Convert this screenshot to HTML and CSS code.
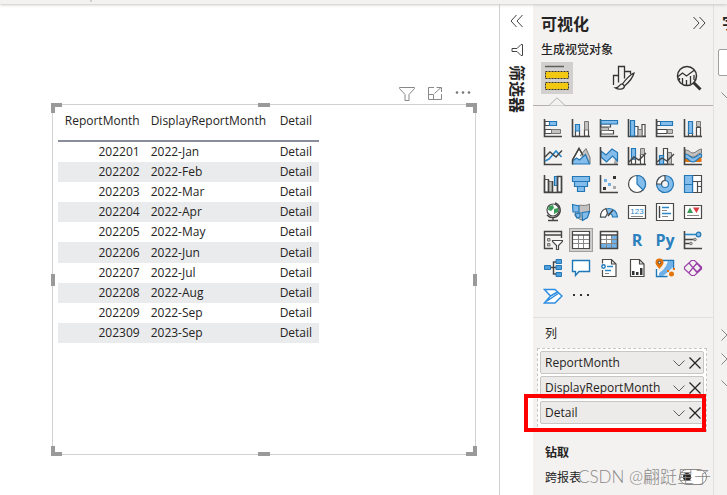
FILE: index.html
```html
<!DOCTYPE html>
<html lang="zh-CN">
  <head>
    <meta charset="UTF-8" />
    <meta name="viewport" content="width=device-width, initial-scale=1.0" />
    <title>Report</title>
    <link rel="stylesheet" href="styles.css">
  </head>
  <body>
    <div class="topbar"><span class="topbar-sep"></span></div>
    <div class="workspace">
      <main class="canvas">
        <div class="visual-tools">
          <button type="button" aria-label="Filter"><svg width="18" height="18" viewBox="0 0 18 18"><path d="M1.500 2.500h15v1l-5.500 6v6h-4v-6l-5.500-6z"/></svg></button>
          <button type="button" aria-label="Focus mode"><svg width="18" height="18" viewBox="0 0 18 18"><path d="M8 2.500H2.500v12h13V9M2.500 9.500h5v5M8.500 8.500l6.500-6M10.500 2.500h5V7"/></svg></button>
          <button type="button" aria-label="More"><svg class="dots" width="18" height="18" viewBox="0 0 18 18"><circle cx="3" cy="7.500" r="1.300"/><circle cx="9" cy="7.500" r="1.300"/><circle cx="15" cy="7.500" r="1.300"/></svg></button>
        </div>
        <div class="visual">
          <table class="report-table">
            <thead>
              <tr><th class="num">ReportMonth</th><th>DisplayReportMonth</th><th>Detail</th></tr>
            </thead>
            <tbody>
              <tr><td class="num">202201</td><td>2022-Jan</td><td>Detail</td></tr>
              <tr><td class="num">202202</td><td>2022-Feb</td><td>Detail</td></tr>
              <tr><td class="num">202203</td><td>2022-Mar</td><td>Detail</td></tr>
              <tr><td class="num">202204</td><td>2022-Apr</td><td>Detail</td></tr>
              <tr><td class="num">202205</td><td>2022-May</td><td>Detail</td></tr>
              <tr><td class="num">202206</td><td>2022-Jun</td><td>Detail</td></tr>
              <tr><td class="num">202207</td><td>2022-Jul</td><td>Detail</td></tr>
              <tr><td class="num">202208</td><td>2022-Aug</td><td>Detail</td></tr>
              <tr><td class="num">202209</td><td>2022-Sep</td><td>Detail</td></tr>
              <tr><td class="num">202309</td><td>2023-Sep</td><td>Detail</td></tr>
            </tbody>
          </table>
          <span class="handle corner tl"></span>
          <span class="handle corner tr"></span>
          <span class="handle corner bl-corner"></span>
          <span class="handle corner br"></span>
          <span class="handle bar top"></span>
          <span class="handle bar bottom"></span>
          <span class="handle side left"></span>
          <span class="handle side right"></span>
        </div>
      </main>

      <aside class="filters">
        <button type="button" aria-label="展开"><svg width="16" height="16" viewBox="0 0 16 16"><path d="M7.500 2L2 8l5.500 6M13.500 2L8 8l5.500 6"/></svg></button>
        <svg width="14" height="14" viewBox="0 0 14 14"><path d="M12.500 1.500v11h-1.500L7 8.500H2v-3h5l4-4z"/></svg>
        <h2>筛选器</h2>
      </aside>

      <section class="viz">
        <header class="viz-head">
          <h2>可视化</h2>
          <button type="button" aria-label="折叠"><svg width="16" height="16" viewBox="0 0 16 16"><path d="M2.500 2L8 8l-5.500 6M8.500 2L14 8l-5.500 6"/></svg></button>
        </header>
        <p class="viz-sub">生成视觉对象</p>
        <div class="tabs">
          <button type="button" class="tab active" aria-label="生成">
            <svg width="26" height="28" viewBox="0 0 26 28"><path d="M1 2.500h19" stroke="#605e5c" stroke-width="1.500"/><path d="M1.500 7.500h23v7h-23zM1.500 18.500h23v7h-23z" fill="#f2c811" stroke="#333" stroke-dasharray="2 1"/></svg>
          </button>
          <button type="button" class="tab" aria-label="格式">
            <svg width="26" height="28" viewBox="0 0 26 28"><path d="M3.500 21v-9.500h5v7M8.500 11.500v-9h6v12M14.500 7.500h6V10M24 9c-3 1-9 7-11.500 11l2 2C18 19 23 13 24 9zM12.500 20c-3-.5-3 4-7 4 3 2 9 1.500 9-2" fill="none" stroke="#333" stroke-width="1.300"/></svg>
          </button>
          <button type="button" class="tab" aria-label="分析">
            <svg width="28" height="28" viewBox="0 0 28 28"><circle cx="12" cy="12" r="9.500" fill="none" stroke="#333" stroke-width="1.500"/><path d="M2.500 13l5-4 4 3 8-6M7.500 20v-6M11.500 21v-5M15.500 20v-8M4.500 16v-2M19 16v-5" fill="none" stroke="#333" stroke-width="1.300"/><path d="M18.500 18.500l7 7" stroke="#333" stroke-width="3"/></svg>
          </button>
        </div>
        <div class="tab-line"><svg width="16" height="9" viewBox="0 0 16 9"><path d="M0 8.500L8 .8l8 7.700"/></svg></div>

        <div class="gallery">
          <button type="button" aria-label="堆积条形图"><svg viewBox="0 0 20 20"><path class="ax" d="M1.500 1v17.500H19"/><path class="w" d="M2 3.500h5v4H2zM2 11.500h7v4H2z"/><path class="b" d="M6.500 3.500h7v4h-7z"/><path class="g" d="M8.500 11.500h9v4h-9z"/></svg></button>
          <button type="button" aria-label="堆积柱形图"><svg viewBox="0 0 20 20"><path class="ax" d="M1.500 1v17.500H19"/><path class="w" d="M4.500 12.500h4v5.500h-4zM13.500 11.500h4v6.500h-4z"/><path class="b" d="M4.500 6.500h4v6.500h-4z"/><path class="g" d="M13.500 3.500h4v8.500h-4z"/></svg></button>
          <button type="button" aria-label="簇状条形图"><svg viewBox="0 0 20 20"><path class="ax" d="M1.500 1v17.500H19"/><path class="w" d="M2 6h9.500v3H2zM2 12.500h12.500v3.500H2z"/><path class="g" d="M2 9.500h7.500v3H2z"/><path class="b" d="M2 2.500h16.500v3.500H2z"/></svg></button>
          <button type="button" aria-label="簇状柱形图"><svg viewBox="0 0 20 20"><path class="ax" d="M1.500 1v17.500H19"/><path class="w" d="M7.500 8.500h3.500V18H7.500zM15 6.500h3V18h-3z"/><path class="g" d="M11 11.500h4V18h-4z"/><path class="b" d="M3.500 2.500h4v15.500h-4z"/></svg></button>
          <button type="button" aria-label="百分比堆积条形图"><svg viewBox="0 0 20 20"><path class="ax" d="M1.500 1v17.500H19"/><path class="w" d="M2 3.500h4v4H2zM2 11.500h10v4H2z"/><path class="b" d="M5.500 3.500h12v4h-12z"/><path class="g" d="M12.500 11.500h5v4h-5z"/></svg></button>
          <button type="button" aria-label="百分比堆积柱形图"><svg viewBox="0 0 20 20"><path class="ax" d="M1.500 1v17.500H19"/><path class="w" d="M5.500 14.500h4V18h-4zM13.500 9.500h4V18h-4z"/><path class="b" d="M5.500 3.500h4v12h-4z"/><path class="g" d="M13.500 3.500h4v5h-4z"/></svg></button>

          <button type="button" aria-label="折线图"><svg viewBox="0 0 20 20"><path class="ax" d="M1.500 1v17.500H19"/><path class="bl" d="M2 15l4-2 7-8 5.500 6"/><path class="ln" d="M2 11l5-5 6 5 6-6.500"/></svg></button>
          <button type="button" aria-label="分区图"><svg viewBox="0 0 20 20"><path class="w" d="M1.500 14L8 2.500l5 8"/><path class="g" d="M9 10l6-7.500 4 9V18"/><path class="b" d="M1.500 18v-3l4-3 3 2 6-5.500L18.500 18z"/><path class="ln" d="M1.500 18.500V14L8 2.500l4 7"/></svg></button>
          <button type="button" aria-label="堆积面积图"><svg viewBox="0 0 20 20"><path class="fg" d="M16 13l2.500 1v4.500h-4z"/><path class="b" d="M2 5l5 4 6-6 5.500 3.500v8.500L13.500 10l-6 6L2 11z"/><path class="ax" d="M1.500 1v17.500H19"/></svg></button>
          <button type="button" aria-label="折线和堆积柱形图"><svg viewBox="0 0 20 20"><path class="ax" d="M1.500 1v17.500H19"/><path class="w" d="M4.500 13h4v5h-4zM13.500 8.500h4V18h-4z"/><path class="b" d="M4.500 2.500h4V13h-4z"/><path class="g" d="M13.500 2.500h4v6h-4z"/><path class="ln" d="M2 16l5-5 5 3 7-7"/></svg></button>
          <button type="button" aria-label="折线和簇状柱形图"><svg viewBox="0 0 20 20"><path class="ax" d="M1.500 1v17.500H19"/><path class="g" d="M12.500 6.500h4V18h-4z"/><path class="w" d="M8.500 2.500h4V18h-4z"/><path class="b" d="M4.500 9.500h4V18h-4z"/><path class="ln" d="M2 16l5-4 5 3 7-7"/></svg></button>
          <button type="button" aria-label="功能区图表"><svg viewBox="0 0 20 20"><path class="fo" d="M2 11h4l3 5H2zM18.500 11h-4l-3 5h7z"/><path class="g" d="M2 4c5 0 5 3 8 3s5-4 8.500-4v4c-4 0-5 4-8.500 4S6 8 2 8z"/><path class="b" d="M2 8c5 0 5 4 8 4s5-4 8.500-4v3c-4 0-4 5-8.500 5S6 12 2 12z"/><path class="ax" d="M1.500 1v17.500H19"/></svg></button>

          <button type="button" aria-label="瀑布图"><svg viewBox="0 0 20 20"><path class="w" d="M1.500 5.500h4V18h-4zM14.500 2.500h4V18h-4z"/><path class="g" d="M5.500 7.500h4V18h-4z"/><path class="b" d="M11.500 2.500h3v9h-3z"/><path class="ax" d="M1.500 1v17.500H18.500V2.500h-4V18M5.500 6v12M9.500 7v11"/></svg></button>
          <button type="button" aria-label="漏斗图"><svg viewBox="0 0 20 20"><path class="b" d="M1.500 2.500h17v5h-17zM3.500 7.500h13v5h-13zM6.500 12.500h7v5h-7z"/></svg></button>
          <button type="button" aria-label="散点图"><svg viewBox="0 0 20 20"><path class="ax" d="M1.500 1v17.500H19"/><path class="fd" d="M14 2h3v3h-3zM4 13h3v3H4z"/><path class="fb" d="M5 5h3v3H5zM9 9h3v3H9z"/><path class="fg" d="M14 12h3v3h-3z"/></svg></button>
          <button type="button" aria-label="饼图"><svg viewBox="0 0 20 20"><circle class="w" cx="10" cy="10" r="8.500"/><path class="b" d="M10 1.500V10l6 6a8.500 8.500 0 0 0-6-14.500z"/></svg></button>
          <button type="button" aria-label="环形图"><svg viewBox="0 0 20 20"><path class="b" fill-rule="evenodd" d="M10 1.500a8.500 8.500 0 1 1 0 17 8.500 8.500 0 0 1 0-17zM10 6.500a3.500 3.500 0 1 0 0 7 3.500 3.500 0 0 0 0-7z"/><path class="w" d="M10 1.500v5A3.500 3.500 0 0 0 6.500 10h-5A8.500 8.500 0 0 1 10 1.500z"/></svg></button>
          <button type="button" aria-label="树状图"><svg viewBox="0 0 20 20"><path class="w" d="M9.500 1.500h9v17h-9zM9.500 7.500h9M14.500 7.500v11M14.500 12.500h4M9.500 7.500h5"/><path class="b" d="M1.500 1.500h8v17h-8zM1.500 10.500h8"/></svg></button>

          <button type="button" aria-label="地图"><svg viewBox="0 0 20 20"><circle class="w" cx="10" cy="8" r="6"/><path class="fgr" d="M6 4l4-1 1 3-3 3-3-1zM11 7l4-1v4l-4 2z"/><path class="ln" d="M12 1a7.500 7.500 0 1 1-8 12M10 15v3.500M5 18.500h10"/></svg></button>
          <button type="button" aria-label="着色地图"><svg viewBox="0 0 20 20"><path class="g" d="M6 4c4-2 7 1 12.500-2v9L10 18l-6-4z"/><path class="b" d="M1.500 2.500L8 4v6H2zM11 10.500l7.500-1-2 6-5 3zM4 12l5-1v4l-3 1z"/></svg></button>
          <button type="button" aria-label="仪表"><svg viewBox="0 0 20 20"><path class="b" d="M1.500 15a8.500 8.500 0 0 1 17 0h-5a3.500 3.500 0 0 0-7 0z"/><path class="w" d="M1.500 15A8.500 8.500 0 0 1 7 6.500l1.500 5-2 3.500z"/><path class="ln" d="M9 14l5-6"/></svg></button>
          <button type="button" aria-label="卡片图"><svg viewBox="0 0 20 20"><path class="w" d="M1.500 3.500h17v13h-17z"/><text class="card-num" x="10" y="12">123</text><path class="gl" d="M4 14.500h12"/></svg></button>
          <button type="button" aria-label="多行卡"><svg viewBox="0 0 20 20"><path class="w" d="M1.500 1.500h17v17h-17z"/><path class="bl" d="M7 5.500h7M7 11.500h9"/><path class="gl" d="M7 8.500h5M7 14.500h6"/><path class="ln" d="M4.500 4v12"/></svg></button>
          <button type="button" aria-label="KPI"><svg viewBox="0 0 20 20"><path class="w" d="M1.500 3.500h17v13h-17z"/><path class="fgr" d="M4 11l3-5.500L10 11z"/><path class="fr" d="M10 5.500h6.500l-3 5.500z"/><path class="gl" d="M4 13.500h12"/></svg></button>

          <button type="button" aria-label="切片器"><svg viewBox="0 0 20 20"><path class="ln" d="M10 18.500H1.500v-17h17V8M1.500 5h17"/><path class="g" d="M4.500 8.500h2.500V11H4.500zM4.500 13.500h2.500V16H4.500z"/><path class="w" d="M9.500 10.500h10v1l-4 4v4h-2v-4l-4-4z"/></svg></button>
          <button type="button" class="selected" aria-label="表"><svg viewBox="0 0 20 20"><path class="w" d="M1.500 1.500h17v17h-17z"/><path class="gl" d="M2 9.500h16M2 13.500h16M7.500 5v13M12.500 5v13"/><path class="ln" d="M1.500 5h17"/></svg></button>
          <button type="button" aria-label="矩阵"><svg viewBox="0 0 20 20"><path class="w" d="M1.500 1.500h17v17h-17z"/><path class="fb" d="M12.500 5.500h6v13h-17v-5h11z"/><path class="gl" d="M2 9.500h16M2 13.500h16M7.500 5v13M12.500 5v13"/><path class="ln" d="M1.500 1.500h17v17h-17zM1.500 5h17"/></svg></button>
          <button type="button" aria-label="R"><span class="lang">R</span></button>
          <button type="button" aria-label="Python"><span class="lang">Py</span></button>
          <button type="button" aria-label="关键影响者"><svg viewBox="0 0 20 20"><path class="ax" d="M1.500 1v17.500H19"/><path class="bl" d="M2 4.500h11"/><path class="ln" d="M2 9.500h10M2 13.500h6"/><circle class="b" cx="15.500" cy="4.500" r="2.300"/><circle class="g" cx="12" cy="9.500" r="1.300"/><circle class="g" cx="8" cy="13.500" r="1.300"/></svg></button>

          <button type="button" aria-label="分解树"><svg viewBox="0 0 20 20"><path class="ln" d="M7 9.500h7M10.500 10V4H14M10.500 10v6H14"/><path class="tree-box" d="M1.500 7.500h6v4h-6zM13 1.500h5.500v4H13zM13 7.500h5.500v4H13zM13 14.500h5.500v4H13z"/></svg></button>
          <button type="button" aria-label="问答"><svg viewBox="0 0 20 20"><path class="bw" d="M1.500 2.500h17v11H8L4.500 17.500v-4h-3z"/></svg></button>
          <button type="button" aria-label="智能叙述"><svg viewBox="0 0 20 20"><path class="w" d="M3.500 5.500v-4h9l4.500 4.500v12.500H3.500V12M12.500 1.500V6H17"/><circle class="bw" cx="4.500" cy="8.500" r="1.700"/><path class="bl" d="M8 8.500h6M6 12.500h6"/><path class="gl" d="M6 15.500h4"/></svg></button>
          <button type="button" aria-label="分页报表"><svg viewBox="0 0 20 20"><path class="w" d="M3.500 1.500h9l4.500 4.500v12.500H3.500zM12.500 1.500V6H17"/><path class="fd" d="M5 13h2.500v4H5zM9 14h2.500v3H9zM13 10h2.500v7H13z"/></svg></button>
          <button type="button" aria-label="ArcGIS"><svg viewBox="0 0 20 20"><path class="bw" d="M7 2.500h11.500v9M1.500 11v7.500h11"/><path class="fb" d="M13 3h5v6l-5 5-5 4H4v-3l4-3 3-4z"/><path class="fo" d="M4.500 11C1 7 .500 5.500.500 4.500a4 4 0 0 1 8 0c0 1-.5 2.500-4 6.500zM16.500 13.500a2.500 2.500 0 1 1 0 5 2.500 2.500 0 0 1 0-5zM18 10h2v2h-2zM12 12h2v2h-2z"/><circle fill="#fff" cx="4.500" cy="4.500" r="1.300"/></svg></button>
          <button type="button" aria-label="Power Apps"><svg viewBox="0 0 20 20"><path class="pu" d="M8.500 2.500h3l7 6.500v2l-7 6.500h-3l-7-6.500V9zM6 5l8 9.500M14 5l-8 9.500M10 9.500l4-4 4 4.500-4 4z"/></svg></button>

          <button type="button" aria-label="Power Automate"><svg viewBox="0 0 20 20"><path class="flow" d="M1.500 3.500h10.500l7 6.500-7 7H1.500l6-7zM7.500 10l7-4M4 15l12-8"/></svg></button>
          <button type="button" aria-label="更多视觉对象"><svg viewBox="0 0 20 20"><path class="fd" d="M2 8h2v2H2zM9 8h2v2H9zM16 8h2v2h-2z"/></svg></button>
        </div>

        <div class="wells">
          <h3>列</h3>
          <div class="well">
            <div class="field"><span>ReportMonth</span><button type="button" aria-label="菜单"><svg width="14" height="14" viewBox="0 0 14 14"><path d="M1.500 4.500L7 10l5.500-5.500"/></svg></button><button type="button" aria-label="删除"><svg class="x" width="14" height="14" viewBox="0 0 14 14"><path d="M1.500 1.500l11 11M12.500 1.500l-11 11"/></svg></button></div>
            <div class="field"><span>DisplayReportMonth</span><button type="button" aria-label="菜单"><svg width="14" height="14" viewBox="0 0 14 14"><path d="M1.500 4.500L7 10l5.500-5.500"/></svg></button><button type="button" aria-label="删除"><svg class="x" width="14" height="14" viewBox="0 0 14 14"><path d="M1.500 1.500l11 11M12.500 1.500l-11 11"/></svg></button></div>
            <div class="field marked"><span>Detail</span><button type="button" aria-label="菜单"><svg width="14" height="14" viewBox="0 0 14 14"><path d="M1.500 4.500L7 10l5.500-5.500"/></svg></button><button type="button" aria-label="删除"><svg class="x" width="14" height="14" viewBox="0 0 14 14"><path d="M1.500 1.500l11 11M12.500 1.500l-11 11"/></svg></button></div>
          </div>
          <h3 class="drill">钻取</h3>
          <div class="switch-row">
            <label for="cross">跨报表</label>
            <input type="checkbox" id="cross" class="switch" />
          </div>
        </div>
      </section>

      <section class="fields">
        <h2>字段</h2>
        <input type="text" aria-label="搜索" />
        <svg width="14" height="14" viewBox="0 0 14 14"><path d="M1.500 4.500L7 10l5.500-5.500"/></svg>
        <div class="tree">
          <svg width="14" height="14" viewBox="0 0 14 14"><path d="M1.500 1.500L7 7l-5.500 5.500"/></svg>
          <svg width="14" height="14" viewBox="0 0 14 14"><path d="M1.500 1.500L7 7l-5.500 5.500"/></svg>
          <svg width="14" height="14" viewBox="0 0 14 14"><path d="M1.500 4.500L7 10l5.500-5.500"/></svg>
        </div>
      </section>
    </div>
    <div class="watermark">CSDN @翩跹星子</div>
  </body>
</html>
```
FILE: styles.css
```css
* {
  box-sizing: border-box;
}
body {
  margin: 0;
  height: 100vh;
  display: flex;
  flex-direction: column;
  overflow: hidden;
  position: relative;
  font-family: "Open Sans", "Noto Sans CJK SC", sans-serif;
  font-size: 12px;
  color: #252423;
  background-color: #fff;
}
h2,
h3,
p {
  margin: 0;
}
button {
  padding: 0;
  border: none;
  background: none;
  cursor: pointer;
}
svg {
  display: block;
  fill: none;
  stroke: #444;
}
.topbar {
  height: 4px;
  flex: none;
  padding-left: 90px;
  background-color: #f3f2f1;
  box-shadow: 0 1px 3px #c8c6c4;
  z-index: 1;
}
.topbar-sep {
  display: block;
  width: 2px;
  height: 2px;
  background-color: #d2d0ce;
}
.workspace {
  flex: 1;
  min-height: 0;
  display: flex;
}

/* report canvas */
.canvas {
  flex: 1;
  display: flex;
  flex-direction: column;
  padding: 79px 23px 40px 52px;
}
.visual-tools {
  display: flex;
  justify-content: flex-end;
  gap: 10px;
  padding-right: 4px;
  height: 21px;
}
.visual-tools svg {
  stroke: #8a8886;
}
.visual-tools .dots {
  fill: #777;
  stroke: none;
}
.visual {
  flex: 1;
  position: relative;
  padding: 2px 5px;
  border: 1px solid #d2d2d2;
}
.report-table {
  width: 261px;
  border-collapse: collapse;
}
.report-table th {
  height: 34px;
  padding: 5px 6px 0 5px;
  font-weight: normal;
  text-align: left;
  vertical-align: top;
  border-bottom: 2px solid #8a8d9b;
}
.report-table td {
  height: 20px;
  padding: 0 6px 0 5px;
  line-height: 20px;
}
.report-table tr:nth-child(6) td {
  height: 21px;
}
.report-table .num {
  text-align: right;
}
.report-table tbody tr:nth-child(even) {
  background-color: #eaebed;
}
.handle {
  position: absolute;
  border: 0 solid #9a9a9a;
}
.corner {
  width: 11px;
  height: 10px;
}
.tl { top: -2px; left: -2px; border-width: 4px 0 0 4px; }
.tr { top: -2px; right: -2px; border-width: 4px 4px 0 0; }
.bl-corner { bottom: -2px; left: -2px; border-width: 0 0 4px 4px; }
.br { bottom: -2px; right: -2px; border-width: 0 4px 4px 0; }
.bar {
  left: calc(50% - 6px);
  width: 12px;
  border-top-width: 4px;
}
.side {
  top: calc(50% - 6px);
  height: 12px;
  border-left-width: 4px;
}
.top { top: -2px; }
.bottom { bottom: -2px; }
.left { left: -2px; }
.right { right: -2px; }

/* collapsed filter pane */
.filters {
  width: 34px;
  flex: none;
  display: flex;
  flex-direction: column;
  align-items: center;
  gap: 14px;
  padding-top: 9px;
  border-left: 1px solid #d2d0ce;
}
.filters h2 {
  writing-mode: vertical-rl;
  text-orientation: sideways;
  font-size: 16px;
  line-height: 18px;
  margin-top: -6px;
}

/* visualizations pane */
.viz {
  width: 180px;
  flex: none;
  background-color: #f3f2f1;
}
.viz-head {
  display: flex;
  justify-content: space-between;
  align-items: center;
  height: 38px;
  padding: 0 6px 0 8px;
}
.viz-head h2 {
  font-size: 16px;
}
.viz-sub {
  padding-left: 8px;
  font-weight: 500;
  line-height: 16px;
  height: 20px;
}
.tabs {
  display: flex;
  justify-content: space-between;
  padding: 0 8px;
}
.tab {
  width: 32px;
  height: 32px;
  display: flex;
  align-items: center;
  justify-content: center;
}
.tab.active {
  background-color: #d2d0ce;
}
.tab-line {
  height: 12px;
  padding: 3px 0 0 16px;
  border-bottom: 1px solid #b3b0ad;
}
.tab-line svg {
  fill: #f3f2f1;
  stroke: #b3b0ad;
}
.gallery {
  display: grid;
  grid-template-columns: repeat(6, 28px);
  grid-auto-rows: 28px;
  padding: 8px 6px 7px;
  border-bottom: 1px solid #e1dfdd;
}
.gallery button {
  display: flex;
  align-items: center;
  justify-content: center;
}
.gallery svg {
  width: 20px;
  height: 20px;
  flex: none;
}
.gallery .selected {
  margin: 2px;
  border: 1px solid #a19f9d;
  background-color: #d2d0ce;
}
.ax { stroke: #444; stroke-width: 1.6; }
.ln { stroke: #444; stroke-width: 1.4; }
.bl { stroke: #2b88c8; stroke-width: 1.6; }
.gl { stroke: #8a8886; }
.w { fill: #fff; stroke: #4a4a4a; stroke-width: 1.2; }
.b { fill: #84bdec; stroke: #2377b5; stroke-width: 1.2; }
.g { fill: #c4c2c0; stroke: #777; }
.bw { fill: #fff; stroke: #1f77b8; stroke-width: 1.4; }
.pu { stroke: #9b3fa8; stroke-width: 1.2; }
.flow { stroke: #2e8de0; stroke-width: 1.5; fill: #fff; }
.tree-box { fill: #4f9fdc; stroke: #2377b5; }
.fb { fill: #6fb1e6; stroke: none; }
.fd { fill: #333; stroke: none; }
.fg { fill: #aaa; stroke: none; }
.fo { fill: #e3730b; stroke: none; }
.fgr { fill: #3a9b57; stroke: none; }
.fr { fill: #d93a3f; stroke: none; }
.card-num {
  font-size: 8px;
  text-anchor: middle;
  fill: #2b88c8;
  stroke: none;
}
.lang {
  font-size: 16px;
  font-weight: 700;
  font-family: "Open Sans", sans-serif;
  color: #2b80bd;
}

/* field wells */
.wells {
  padding: 7px 6px 0 4px;
}
.wells h3 {
  padding-left: 8px;
  font-size: 12px;
  font-weight: normal;
  line-height: 18px;
}
.well {
  display: flex;
  flex-direction: column;
  gap: 2px;
  margin-top: 5px;
  padding: 2px 2px 7px;
  border: 1px dashed #c8c6c4;
  background-color: #fff;
}
.field {
  position: relative;
  display: flex;
  align-items: center;
  gap: 2px;
  height: 23px;
  padding: 0 1px 0 4px;
  border: 1px solid #c8c6c4;
  border-radius: 2px;
  background-color: #edebe9;
}
.field span {
  flex: 1;
}
.field svg {
  stroke: #605e5c;
}
.field .x {
  stroke: #252423;
  stroke-width: 1.3;
}
.marked::after {
  content: "";
  position: absolute;
  inset: -8px -3px -9px -17px;
  border: 4px solid #fe0000;
}
.wells .drill {
  margin-top: 12px;
  font-weight: bold;
}
.switch-row {
  display: flex;
  justify-content: space-between;
  align-items: center;
  margin-top: 6px;
  padding-left: 8px;
}
.switch {
  appearance: none;
  width: 28px;
  height: 16px;
  margin: 0;
  padding: 3px;
  border: 1px solid #8a8886;
  border-radius: 8px;
  background-color: #fff;
}
.switch::before {
  content: "";
  display: block;
  width: 8px;
  height: 8px;
  border-radius: 4px;
  background-color: #252423;
}

/* data fields pane, runs past the window edge */
.fields {
  width: 14px;
  flex: none;
  overflow: hidden;
  padding-left: 4px;
  border-left: 1px solid #e1dfdd;
  background-color: #f3f2f1;
}
.fields h2 {
  width: 40px;
  padding-left: 4px;
  font-size: 16px;
  line-height: 38px;
}
.fields input {
  display: block;
  width: 120px;
  height: 27px;
  margin: 7px 0 12px;
  border: 1px solid #a19f9d;
  border-radius: 2px;
  background-color: #fff;
}
.fields svg {
  margin-left: 2px;
  stroke: #8a8886;
}
.tree {
  display: grid;
  gap: 10px;
  margin-top: 226px;
}
.watermark {
  position: absolute;
  right: 16px;
  bottom: 6px;
  font-family: "Lato", "Noto Sans CJK SC", sans-serif;
  font-size: 17px;
  font-weight: 300;
  line-height: 24px;
  color: #8a8886;
}
```
